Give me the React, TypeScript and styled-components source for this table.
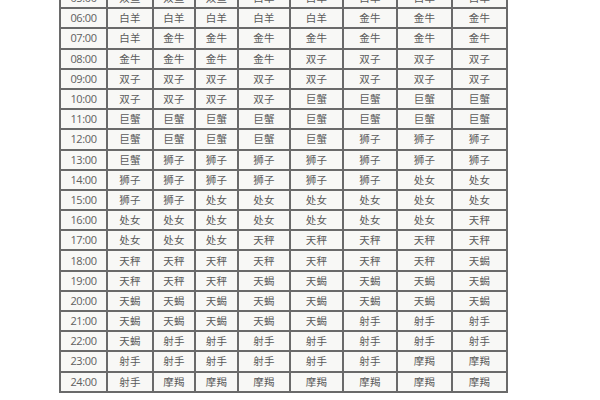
import styled, { createGlobalStyle } from "styled-components";

const GlobalStyle = createGlobalStyle`
  html, body {
    margin: 0;
    padding: 0;
    background: #ffffff;
    overflow: hidden;
  }
`;

const columnWidths = [47, 46, 42, 43, 52, 53, 54, 55, 55];

const rows: [string, string[]][] = [
  ["05:00", ["双鱼", "双鱼", "双鱼", "白羊", "白羊", "白羊", "白羊", "白羊"]],
  ["06:00", ["白羊", "白羊", "白羊", "白羊", "白羊", "金牛", "金牛", "金牛"]],
  ["07:00", ["白羊", "金牛", "金牛", "金牛", "金牛", "金牛", "金牛", "金牛"]],
  ["08:00", ["金牛", "金牛", "金牛", "金牛", "双子", "双子", "双子", "双子"]],
  ["09:00", ["双子", "双子", "双子", "双子", "双子", "双子", "双子", "双子"]],
  ["10:00", ["双子", "双子", "双子", "双子", "巨蟹", "巨蟹", "巨蟹", "巨蟹"]],
  ["11:00", ["巨蟹", "巨蟹", "巨蟹", "巨蟹", "巨蟹", "巨蟹", "巨蟹", "巨蟹"]],
  ["12:00", ["巨蟹", "巨蟹", "巨蟹", "巨蟹", "巨蟹", "狮子", "狮子", "狮子"]],
  ["13:00", ["巨蟹", "狮子", "狮子", "狮子", "狮子", "狮子", "狮子", "狮子"]],
  ["14:00", ["狮子", "狮子", "狮子", "狮子", "狮子", "狮子", "处女", "处女"]],
  ["15:00", ["狮子", "狮子", "处女", "处女", "处女", "处女", "处女", "处女"]],
  ["16:00", ["处女", "处女", "处女", "处女", "处女", "处女", "处女", "天秤"]],
  ["17:00", ["处女", "处女", "处女", "天秤", "天秤", "天秤", "天秤", "天秤"]],
  ["18:00", ["天秤", "天秤", "天秤", "天秤", "天秤", "天秤", "天秤", "天蝎"]],
  ["19:00", ["天秤", "天秤", "天秤", "天蝎", "天蝎", "天蝎", "天蝎", "天蝎"]],
  ["20:00", ["天蝎", "天蝎", "天蝎", "天蝎", "天蝎", "天蝎", "天蝎", "天蝎"]],
  ["21:00", ["天蝎", "天蝎", "天蝎", "天蝎", "天蝎", "射手", "射手", "射手"]],
  ["22:00", ["天蝎", "射手", "射手", "射手", "射手", "射手", "射手", "射手"]],
  ["23:00", ["射手", "射手", "射手", "射手", "射手", "射手", "摩羯", "摩羯"]],
  ["24:00", ["射手", "摩羯", "摩羯", "摩羯", "摩羯", "摩羯", "摩羯", "摩羯"]],
];

const App = () => {
  return (
    <Page>
      <GlobalStyle />
      <Sheet>
        <colgroup>
          {columnWidths.map((w, i) => (
            <col key={i} style={{ width: w }} />
          ))}
        </colgroup>
        <tbody>
          {rows.map(([time, signs]) => (
            <Row key={time}>
              <TimeCell>{time}</TimeCell>
              {signs.map((sign, i) => (
                <SignCell key={i}>{sign}</SignCell>
              ))}
            </Row>
          ))}
        </tbody>
      </Sheet>
    </Page>
  );
};

const Page = styled.div`
  width: 600px;
  height: 400px;
  overflow: hidden;
  background: #ffffff;
  padding-left: 59px;
  box-sizing: border-box;
`;

const Sheet = styled.table`
  margin-top: -13px;
  border-collapse: collapse;
  table-layout: fixed;
  width: 449px;
  background: #f8f8f6;
  border: 2px solid #6e6e6e;
`;

const Row = styled.tr`
  height: 20.2px;
`;

const Cell = styled.td`
  border: 2px solid #6a6a6a;
  padding: 0;
  text-align: center;
  vertical-align: middle;
  color: #5a5a5a;
  line-height: 16px;
  white-space: nowrap;
  overflow: hidden;
`;

const TimeCell = styled(Cell)`
  font-family: "Open Sans", "Liberation Sans", sans-serif;
  font-size: 11px;
  letter-spacing: -0.4px;
  color: #606060;
`;

const SignCell = styled(Cell)`
  font-family: "Noto Sans CJK SC", "Noto Sans", sans-serif;
  font-size: 10.5px;
  letter-spacing: 0.3px;
`;

export default App;
